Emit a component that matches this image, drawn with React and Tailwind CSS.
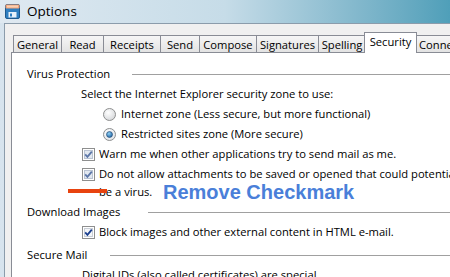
import React from "react";

const tabs = [
  { label: "General", w: "w-[48px]" },
  { label: "Read", w: "w-[42px]" },
  { label: "Receipts", w: "w-[57px]" },
  { label: "Send", w: "w-[39px]" },
  { label: "Compose", w: "w-[57px]" },
  { label: "Signatures", w: "w-[62px]" },
  { label: "Spelling", w: "w-[47px]" },
  { label: "Security", w: "w-[53px]", active: true },
  { label: "Connections", w: "w-[70px]" },
];

function Checkbox({ dark }) {
  const mark = dark ? "#1b3f8f" : "#5d77a8";
  return (
    <svg width="13" height="13" viewBox="0 0 13 13" className="shrink-0">
      <rect x="0.5" y="0.5" width="12" height="12" fill="#fff" stroke="#8e8f8f" />
      <rect x="2.5" y="2.5" width="8" height="8" fill={dark ? "#f4f6f9" : "#e2e8f0"} stroke={dark ? "#c9ced6" : "#b9c3d2"} />
      <path d="M3.2 6.4 L5.4 8.8 L9.8 3.6" fill="none" stroke={mark} strokeWidth="1.8" />
    </svg>
  );
}

function Radio({ on }) {
  return (
    <svg width="13" height="13" viewBox="0 0 13 13" className="shrink-0">
      <defs>
        <radialGradient id={on ? "rg1" : "rg0"} cx="0.4" cy="0.35" r="0.7">
          <stop offset="0" stopColor="#ffffff" />
          <stop offset="1" stopColor={on ? "#dfe3e8" : "#d4d6d9"} />
        </radialGradient>
        <radialGradient id="dot" cx="0.4" cy="0.35" r="0.7">
          <stop offset="0" stopColor="#8fd0f5" />
          <stop offset="1" stopColor="#1a5f9e" />
        </radialGradient>
      </defs>
      <circle cx="6.5" cy="6.5" r="6" fill={`url(#${on ? "rg1" : "rg0"})`} stroke="#8e8f8f" />
      {on && <circle cx="6.5" cy="6.5" r="3" fill="url(#dot)" stroke="#24476e" strokeWidth="0.6" />}
    </svg>
  );
}

function Header({ text, w }) {
  return (
    <div className="flex items-center h-[20px] pl-[15px]">
      <span className={`${w} shrink-0 whitespace-nowrap`}>{text}</span>
      <div className="flex-1 h-px bg-[#a0a0a0]" />
    </div>
  );
}

export default function App() {
  return (
    <div className="relative w-[450px] h-[277px] overflow-hidden flex flex-col bg-gradient-to-r from-[#d7e4ee] via-[#c4d9e6] to-[#9fc6d6] font-['Open_Sans',sans-serif] text-[11.2px] text-black">
      {/* title bar */}
      <div className="h-[23px] shrink-0 flex items-center pl-[5px] gap-[7px] bg-gradient-to-r from-[#dfe9f1] via-[#c6dce8] to-[#4f9fb9]">
        <svg width="15" height="15" viewBox="0 0 15 15">
          <rect x="0.5" y="0.5" width="14" height="14" rx="1.5" fill="#2f7fc1" stroke="#1f5a8e" />
          <rect x="0.5" y="0.5" width="14" height="4" rx="1" fill="#f2a277" />
          <rect x="2" y="1.5" width="11" height="2" fill="#fbd1b4" />
          <rect x="3.5" y="8" width="8" height="5.5" fill="#e8f2fa" />
          <rect x="5" y="9.5" width="2" height="3" fill="#2f7fc1" />
        </svg>
        <span className="text-[13.5px] leading-none text-black">Options</span>
      </div>

      {/* dialog body */}
      <div className="flex-1 ml-[4px] border-l border-t border-[#8b9cab] bg-[#f0f0f0] pl-[6px] pt-[8px] flex flex-col">
        <div className="relative z-10 flex items-end h-[21px] pl-[2px] overflow-hidden">
          {tabs.map((t) =>
            t.active ? (
              <div
                key={t.label}
                className={`${t.w} shrink-0 h-[21px] bg-white border-l border-r border-t border-[#898c95] flex justify-center leading-[17px] -mx-px`}
              >
                {t.label}
              </div>
            ) : (
              <div
                key={t.label}
                className={`${t.w} shrink-0 h-[18px] bg-gradient-to-b from-[#f6f6f6] to-[#e3e3e3] border-l border-t border-b border-[#898c95] flex justify-center leading-[17px] whitespace-nowrap overflow-hidden`}
              >
                {t.label}
              </div>
            )
          )}
        </div>

        <div className="-mt-px flex-1 bg-white border-l border-t border-[#898c95] pt-[11px] flex flex-col">
          <Header text="Virus Protection" w="w-[105px]" />
          <div className="h-[20px] leading-[20px] pl-[69px] whitespace-nowrap">
            Select the Internet Explorer security zone to use:
          </div>
          <div className="h-[20px] flex items-center gap-[5px] pl-[91px] whitespace-nowrap">
            <Radio />
            <span>Internet zone (Less secure, but more functional)</span>
          </div>
          <div className="h-[20px] flex items-center gap-[5px] pl-[91px] whitespace-nowrap">
            <Radio on />
            <span>Restricted sites zone (More secure)</span>
          </div>
          <div className="h-[20px] flex items-center gap-[4px] pl-[70px] whitespace-nowrap">
            <Checkbox />
            <span>Warn me when other applications try to send mail as me.</span>
          </div>
          <div className="mt-[1px] flex items-start gap-[4px] pl-[70px] leading-[18px] overflow-hidden">
            <div className="pt-[3px]">
              <Checkbox />
            </div>
            <span className="whitespace-nowrap">
              Do not allow attachments to be saved or opened that could potentially
              <br />
              be a virus.
            </span>
          </div>
          <div className="mt-[1px]">
            <Header text="Download Images" w="w-[121px]" />
          </div>
          <div className="h-[20px] flex items-center gap-[4px] pl-[70px] whitespace-nowrap">
            <Checkbox dark />
            <span>Block images and other external content in HTML e-mail.</span>
          </div>
          <div className="mt-[3px]">
            <Header text="Secure Mail" w="w-[83px]" />
          </div>
          <div className="h-[20px] leading-[20px] pl-[70px] whitespace-nowrap">
            Digital IDs (also called certificates) are special
          </div>
        </div>
      </div>

      {/* annotation overlay */}
      <div className="absolute left-[68px] top-[189px] w-[39px] h-[4px] bg-[#e8430f]" />
      <div className="absolute left-[163px] top-[181px] font-['Liberation_Sans',sans-serif] font-bold text-[20px] leading-[22px] text-[#4a7fd9] whitespace-nowrap">
        Remove Checkmark
      </div>
    </div>
  );
}
